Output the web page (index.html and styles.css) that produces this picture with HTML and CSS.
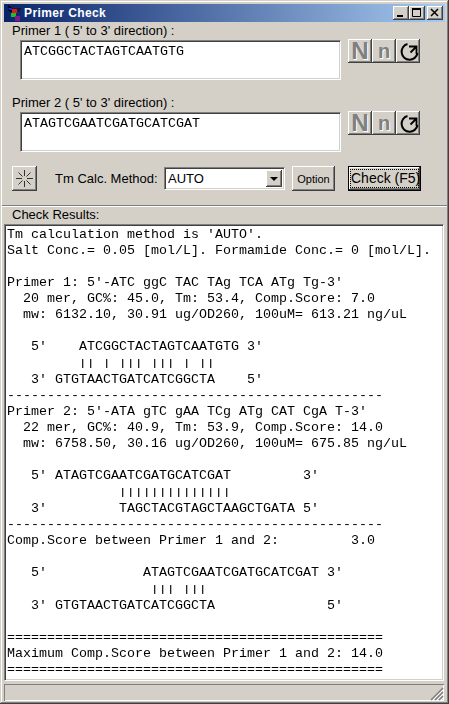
FILE: index.html
```html
<!DOCTYPE html>
<html lang="en">
<head>
<meta charset="utf-8">
<title>Primer Check</title>
<link rel="stylesheet" href="styles.css">
</head>
<body>
<div class="window">
  <header class="titlebar">
    <svg class="app-icon" width="16" height="16" viewBox="0 0 16 16">
      <path d="M2 1l4 3-3 1 5 3" fill="none" stroke="#000" stroke-width="1.5"/>
      <path d="M8 4h7M10 4v3M13 4v3" fill="none" stroke="#111" stroke-width="1"/>
      <rect x="6" y="4" width="5" height="4" fill="#e01818"/>
      <rect x="5" y="8" width="5" height="4" fill="#18c030"/>
      <rect x="9" y="11" width="5" height="5" fill="#801890"/>
      <rect x="3" y="3" width="3" height="2" fill="#1828d0"/>
    </svg>
    <span class="title">Primer Check</span>
    <div class="caption-buttons">
      <button class="cap"><svg width="10" height="10" viewBox="0 0 10 10"><rect x="1" y="7" width="6" height="2"/></svg></button>
      <button class="cap"><svg width="10" height="10" viewBox="0 0 10 10"><path d="M.5 1.5h8v7h-8z" fill="none" stroke="#000"/><rect y="0" x="0" width="9" height="2"/></svg></button>
      <button class="cap cap-close"><svg width="10" height="10" viewBox="0 0 10 10"><path d="M1 1l7 7M8 1l-7 7" stroke="#000" stroke-width="1.5"/></svg></button>
    </div>
  </header>

  <section class="primer">
    <label class="field-label">Primer 1 ( 5' to 3' direction) :</label>
    <div class="primer-row">
      <div class="seq-box">ATCGGCTACTAGTCAATGTG</div>
      <div class="tool-group">
        <button class="tool tool-off tool-big">N</button>
        <button class="tool tool-off">n</button>
        <button class="tool"><svg width="24" height="24" viewBox="0 0 24 24"><path d="M11.500 5A8 8 0 1 0 21.500 14" fill="none" stroke="#000" stroke-width="2"/><path d="M13 7.500H20.500V15M20.500 7.500L14.500 13.500" fill="none" stroke="#000" stroke-width="1.800"/></svg></button>
      </div>
    </div>
  </section>

  <section class="primer primer-second">
    <label class="field-label">Primer 2 ( 5' to 3' direction) :</label>
    <div class="primer-row">
      <div class="seq-box">ATAGTCGAATCGATGCATCGAT</div>
      <div class="tool-group">
        <button class="tool tool-off tool-big">N</button>
        <button class="tool tool-off">n</button>
        <button class="tool"><svg width="24" height="24" viewBox="0 0 24 24"><path d="M11.500 5A8 8 0 1 0 21.500 14" fill="none" stroke="#000" stroke-width="2"/><path d="M13 7.500H20.500V15M20.500 7.500L14.500 13.500" fill="none" stroke="#000" stroke-width="1.800"/></svg></button>
      </div>
    </div>
  </section>

  <section class="method-row">
    <button class="star-btn"><svg width="21" height="21" viewBox="0 0 21 21"><path d="M10.500 2v6M10.500 13v6M2 10.500h6M13 10.500h6M4.500 4.500l4 4M16.500 4.500l-4 4M4.500 16.500l4-4M16.500 16.500l-4-4" stroke="#333" stroke-width="1" fill="none"/></svg></button>
    <span class="method-label">Tm Calc. Method:</span>
    <div class="select">
      <span class="select-value">AUTO</span>
      <span class="select-arrow"><i></i></span>
    </div>
    <button class="push option-btn">Option</button>
    <button class="push check-btn"><span>Check (F5)</span></button>
  </section>

  <div class="separator"></div>
  <div class="results-label">Check Results:</div>
  <pre class="results">Tm calculation method is 'AUTO'.
Salt Conc.= 0.05 [mol/L]. Formamide Conc.= 0 [mol/L].

Primer 1: 5'-ATC ggC TAC TAg TCA ATg Tg-3'
  20 mer, GC%: 45.0, Tm: 53.4, Comp.Score: 7.0
  mw: 6132.10, 30.91 ug/OD260, 100uM= 613.21 ng/uL

   5'    ATCGGCTACTAGTCAATGTG 3'
<span class="bonds">         || | ||| ||| | ||</span>
   3' GTGTAACTGATCATCGGCTA    5'
-----------------------------------------------
Primer 2: 5'-ATA gTC gAA TCg ATg CAT CgA T-3'
  22 mer, GC%: 40.9, Tm: 53.9, Comp.Score: 14.0
  mw: 6758.50, 30.16 ug/OD260, 100uM= 675.85 ng/uL

   5' ATAGTCGAATCGATGCATCGAT         3'
<span class="bonds">              ||||||||||||||</span>
   3'         TAGCTACGTAGCTAAGCTGATA 5'
-----------------------------------------------
Comp.Score between Primer 1 and 2:         3.0

   5'            ATAGTCGAATCGATGCATCGAT 3'
<span class="bonds">                  ||| |||</span>
   3' GTGTAACTGATCATCGGCTA              5'

===============================================
Maximum Comp.Score between Primer 1 and 2: 14.0
===============================================</pre>
  <footer class="statusbar">
    <svg class="grip" width="14" height="14" viewBox="0 0 14 14"><path d="M13 1L1 13M13 5L5 13M13 9L9 13" stroke="#808080" stroke-width="1.500"/><path d="M13 3L3 13M13 7L7 13M13 11L11 13" stroke="#fff" stroke-width="1"/></svg>
  </footer>
</div>
</body>
</html>
```

FILE: styles.css
```css
html, body {
  margin: 0;
  padding: 0;
  height: 100%;
  overflow: hidden;
  background: #d4d0c8;
}

* { box-sizing: border-box; }

.window {
  width: 449px;
  height: 704px;
  padding: 4px 4px 3px;
  display: flex;
  flex-direction: column;
  background: #d4d0c8;
  font-family: "Liberation Sans", Arial, sans-serif;
  font-size: 13px;
  color: #000;
  box-shadow: inset -1px -1px 0 #404040, inset 1px 1px 0 #d4d0c8, inset -2px -2px 0 #808080, inset 2px 2px 0 #fff;
}

.titlebar {
  flex: none;
  height: 18px;
  display: flex;
  align-items: center;
  background: linear-gradient(90deg, #0a246a, #a6caf0);
  padding: 0 2px 0 2px;
}

.app-icon { flex: none; margin-right: 2px; }

.title {
  flex: 1;
  color: #fff;
  font-weight: bold;
  font-size: 12px;
  letter-spacing: 0.4px;
}

.caption-buttons { display: flex; flex: none; }

.cap {
  width: 16px;
  height: 14px;
  padding: 0;
  display: flex;
  align-items: center;
  justify-content: center;
  background: #d4d0c8;
  border: 0;
  box-shadow: inset -1px -1px 0 #404040, inset 1px 1px 0 #fff, inset -2px -2px 0 #808080;
}

.cap-close { margin-left: 2px; }

.primer-second { margin-top: 14px; }

.field-label {
  display: block;
  height: 18px;
  line-height: 17px;
  padding-left: 8px;
}

.primer-row {
  display: flex;
  align-items: flex-start;
  padding-left: 16px;
}

.seq-box {
  width: 321px;
  height: 40px;
  padding: 4px 3px 3px;
  background: #fff;
  font-family: "Liberation Mono", monospace;
  font-size: 13.33px;
  line-height: 14px;
  border: 1px solid;
  border-color: #808080 #fff #fff #808080;
  box-shadow: inset 1px 1px 0 #404040, inset -1px -1px 0 #d4d0c8;
  filter: grayscale(1);
}

.tool-group {
  display: flex;
  margin: -1px 0 0 7px;
}

.tool {
  width: 24px;
  height: 24px;
  padding: 0;
  display: flex;
  align-items: center;
  justify-content: center;
  background: #d4d0c8;
  border: 0;
  font-family: "Liberation Sans", Arial, sans-serif;
  font-weight: bold;
  font-size: 20px;
  box-shadow: inset -1px -1px 0 #404040, inset 1px 1px 0 #fff, inset -2px -2px 0 #808080;
}

.tool-off {
  color: #808080;
  text-shadow: 1px 1px 0 #fff;
}

.tool-big { font-size: 24px; }

.method-row {
  display: flex;
  align-items: center;
  height: 25px;
  margin-top: 14px;
  padding-left: 8px;
}

.star-btn {
  width: 25px;
  height: 25px;
  padding: 0;
  display: flex;
  align-items: center;
  justify-content: center;
  background: #d4d0c8;
  border: 0;
  box-shadow: inset -1px -1px 0 #404040, inset 1px 1px 0 #fff, inset -2px -2px 0 #808080;
}

.method-label { margin-left: 18px; width: 109px; }

.select {
  width: 121px;
  height: 23px;
  display: flex;
  justify-content: space-between;
  background: #fff;
  border: 1px solid;
  border-color: #808080 #fff #fff #808080;
  box-shadow: inset 1px 1px 0 #404040, inset -1px -1px 0 #d4d0c8;
  padding: 2px;
}

.select-value { line-height: 17px; padding-left: 1px; }

.select-arrow {
  width: 16px;
  height: 17px;
  display: flex;
  align-items: center;
  justify-content: center;
  background: #d4d0c8;
  box-shadow: inset -1px -1px 0 #404040, inset 1px 1px 0 #fff, inset -2px -2px 0 #808080;
}

.select-arrow i {
  width: 0;
  height: 0;
  border-left: 4px solid transparent;
  border-right: 4px solid transparent;
  border-top: 4px solid #000;
}

.push {
  height: 25px;
  padding: 0;
  background: #d4d0c8;
  border: 0;
  font-family: "Liberation Sans", Arial, sans-serif;
  color: #000;
  box-shadow: inset -1px -1px 0 #404040, inset 1px 1px 0 #fff, inset -2px -2px 0 #808080;
}

.option-btn {
  width: 43px;
  margin-left: 7px;
  font-size: 11px;
}

.check-btn {
  width: 73px;
  margin-left: 13px;
  font-size: 14px;
  border: 1px solid #000;
  padding: 3px 2px;
}

.check-btn span {
  display: block;
  height: 17px;
  line-height: 16px;
  white-space: nowrap;
  outline: 1px dotted #000;
}

.separator {
  flex: none;
  height: 2px;
  margin: 14px -2px 0;
  background: #808080;
  border-bottom: 1px solid #fff;
}

.results-label {
  flex: none;
  height: 17px;
  line-height: 16px;
  padding-left: 8px;
}

.results {
  flex: 1;
  margin: 0 1px 0 0;
  padding: 2px 2px;
  overflow: hidden;
  background: #fff;
  font-family: "Liberation Mono", monospace;
  font-size: 13.33px;
  line-height: 16px;
  border: 1px solid;
  border-color: #808080 #fff #fff #808080;
  box-shadow: inset 1px 1px 0 #404040, inset -1px -1px 0 #d4d0c8;
  filter: grayscale(1);
}

.bonds {
  font-size: 9px;
  font-weight: bold;
  letter-spacing: 2.6px;
  margin-left: 1px;
}

.statusbar {
  flex: none;
  position: relative;
  height: 17px;
  margin-top: 3px;
  margin-right: 1px;
  background: #d4d0c8;
  box-shadow: inset 1px 1px 0 #808080, inset -1px -1px 0 #fff;
}

.grip {
  position: absolute;
  right: 0;
  bottom: 0;
}
```
